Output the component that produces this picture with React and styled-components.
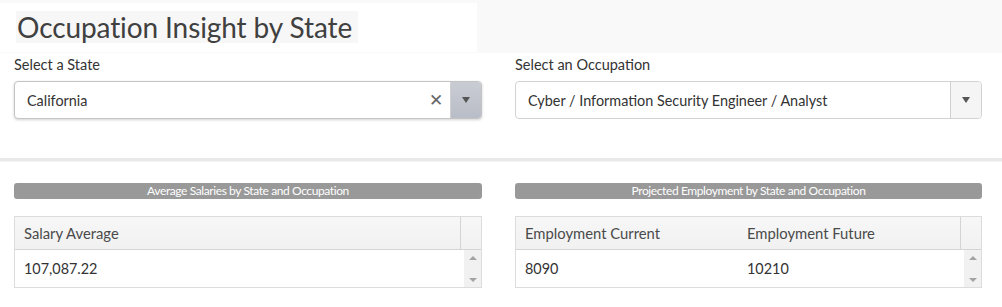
import React from "react";
import styled, { createGlobalStyle } from "styled-components";

const Global = createGlobalStyle`
  html, body { margin: 0; padding: 0; background: #fff; }
  body { font-family: "Lato", "Noto Sans", sans-serif; color: #333; }
  * { box-sizing: border-box; }
`;

const Page = styled.div`
  width: 1002px;
  height: 307px;
  overflow: hidden;
  background: #fff;
`;

const TopBand = styled.div`
  height: 53px;
  background: #f9f9f9;
  padding-top: 3px;
  display: flex;
`;

const TitlePanel = styled.div`
  width: 477px;
  height: 49px;
  background: #fff;
  padding: 8px 0 0 16px;
`;

const Title = styled.h1`
  display: inline-block;
  margin: 0;
  padding: 0 6px 0 1px;
  height: 32px;
  line-height: 32px;
  background: #f7f7f7;
  font-size: 28px;
  font-weight: 400;
  color: #404040;
  letter-spacing: -0.1px;
`;

const Controls = styled.div`
  display: grid;
  grid-template-columns: 468px 467px;
  column-gap: 33px;
  padding: 3px 20px 0 14px;
  height: 105px;
`;

const Field = styled.div`
  display: flex;
  flex-direction: column;
`;

const Label = styled.label`
  font-size: 14.5px;
  color: #333;
  line-height: 18px;
  height: 25px;
`;

const SelectBox = styled.div`
  display: flex;
  height: 38px;
  border: 1px solid ${(p) => (p.$focused ? "#c4c4c4" : "#d2d2d2")};
  border-radius: 4px;
  background: #fff;
  overflow: hidden;
  box-shadow: ${(p) => (p.$focused ? "0 1px 3px rgba(0,0,0,0.18)" : "none")};
`;

const SelectValue = styled.div`
  flex: 1;
  display: flex;
  align-items: center;
  padding-left: 12px;
  font-size: 14.4px;
  color: #333;
`;

const Clear = styled.span`
  width: 28px;
  display: flex;
  align-items: center;
  justify-content: center;
  font-size: 17px;
  color: #666;
  padding-bottom: 2px;
`;

const ArrowZone = styled.div`
  width: 31px;
  display: flex;
  align-items: center;
  justify-content: center;
  border-left: 1px solid #d0d0d0;
  background: ${(p) =>
    p.$focused ? "linear-gradient(#c9ccd3, #b9bdc7)" : "#f5f5f5"};
`;

const Caret = styled.span`
  width: 0;
  height: 0;
  border-left: 4px solid transparent;
  border-right: 4px solid transparent;
  border-top: 6px solid #555;
`;

const Divider = styled.div`
  height: 4px;
  background: #e9e9e9;
  border-bottom: 1px solid #f5f5f5;
`;

const Panels = styled.div`
  display: grid;
  grid-template-columns: 468px 467px;
  column-gap: 33px;
  padding: 21px 20px 0 14px;
`;

const Panel = styled.div`
  display: flex;
  flex-direction: column;
`;

const PanelHeader = styled.div`
  height: 16px;
  background: #999;
  border-radius: 3px;
  color: #fff;
  font-size: 12px;
  line-height: 16px;
  text-align: center;
  letter-spacing: -0.4px;
`;

const Table = styled.div`
  margin-top: 17px;
  border: 1px solid #dcdcdc;
  display: flex;
  flex-direction: column;
`;

const HeadRow = styled.div`
  display: flex;
  height: 33px;
  background: linear-gradient(#f7f7f7, #f1f1f1);
  border-bottom: 1px solid #d4d4d4;
`;

const BodyRow = styled.div`
  display: flex;
  height: 37px;
  background: #fff;
`;

const Cells = styled.div`
  flex: 1;
  display: grid;
  grid-template-columns: repeat(${(p) => p.$cols}, 1fr);
`;

const Cell = styled.div`
  display: flex;
  align-items: center;
  padding-left: 9px;
  font-size: ${(p) => (p.$head ? "14.8px" : "14.4px")};
  color: ${(p) => (p.$head ? "#4a4a4a" : "#333")};
`;

const HeadSpacer = styled.div`
  width: 21px;
  border-left: 1px solid #d4d4d4;
`;

const ScrollTrack = styled.div`
  width: 17px;
  margin-left: 4px;
  background: #f1f1f1;
  display: flex;
  flex-direction: column;
  justify-content: space-between;
  align-items: center;
  padding: 6px 0 5px;
`;

const ScrollArrow = styled.span`
  width: 0;
  height: 0;
  border-left: 4px solid transparent;
  border-right: 4px solid transparent;
  ${(p) =>
    p.$up ? "border-bottom: 4px solid #a3a3a3;" : "border-top: 4px solid #a3a3a3;"}
`;

function Select({ value, focused, clearable }) {
  return (
    <SelectBox $focused={focused}>
      <SelectValue>{value}</SelectValue>
      {clearable && <Clear>✕</Clear>}
      <ArrowZone $focused={focused}>
        <Caret />
      </ArrowZone>
    </SelectBox>
  );
}

function DataTable({ headers, row }) {
  return (
    <Table>
      <HeadRow>
        <Cells $cols={headers.length}>
          {headers.map((h) => (
            <Cell $head key={h}>
              {h}
            </Cell>
          ))}
        </Cells>
        <HeadSpacer />
      </HeadRow>
      <BodyRow>
        <Cells $cols={row.length}>
          {row.map((v, i) => (
            <Cell key={i}>{v}</Cell>
          ))}
        </Cells>
        <ScrollTrack>
          <ScrollArrow $up />
          <ScrollArrow />
        </ScrollTrack>
      </BodyRow>
    </Table>
  );
}

export default function App() {
  return (
    <Page>
      <Global />
      <TopBand>
        <TitlePanel>
          <Title>Occupation Insight by State</Title>
        </TitlePanel>
      </TopBand>
      <Controls>
        <Field>
          <Label>Select a State</Label>
          <Select value="California" focused clearable />
        </Field>
        <Field>
          <Label>Select an Occupation</Label>
          <Select value="Cyber / Information Security Engineer / Analyst" />
        </Field>
      </Controls>
      <Divider />
      <Panels>
        <Panel>
          <PanelHeader>Average Salaries by State and Occupation</PanelHeader>
          <DataTable headers={["Salary Average"]} row={["107,087.22"]} />
        </Panel>
        <Panel>
          <PanelHeader>Projected Employment by State and Occupation</PanelHeader>
          <DataTable
            headers={["Employment Current", "Employment Future"]}
            row={["8090", "10210"]}
          />
        </Panel>
      </Panels>
    </Page>
  );
}
